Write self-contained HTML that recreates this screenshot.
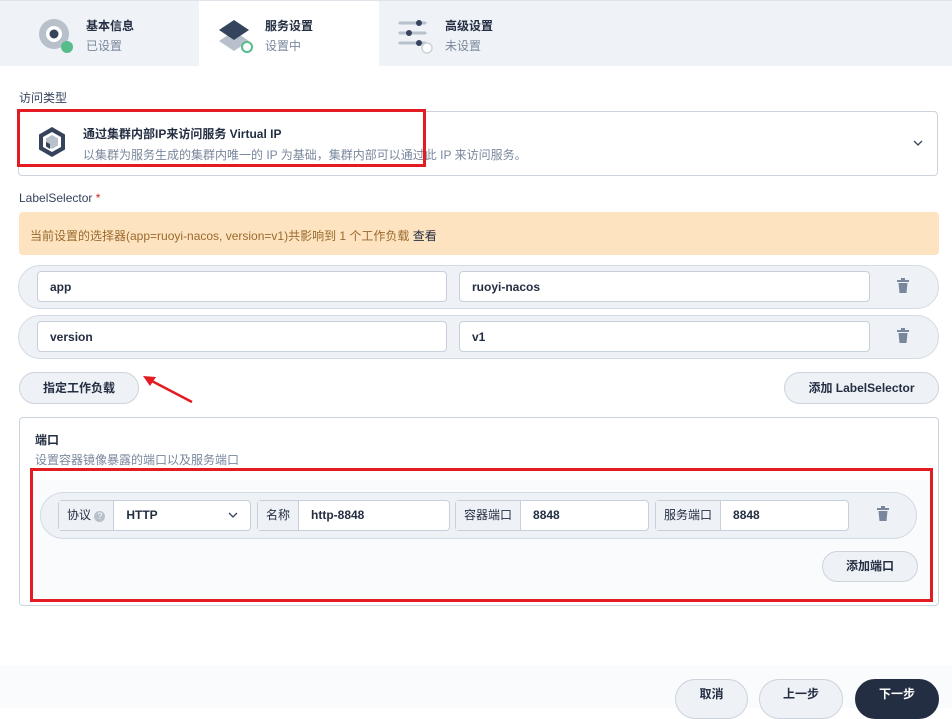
<!DOCTYPE html>
<html><head><meta charset="utf-8"><style>
*{box-sizing:border-box;margin:0;padding:0}
body{width:952px;height:708px;overflow:hidden;background:#fff;font-family:"Liberation Sans","Noto Sans CJK SC",sans-serif;color:#242e42;font-size:12px;position:relative}
.abs{position:absolute}
.tabs{left:0;top:0;width:952px;height:66px;background:#eff2f6;border-top:1px solid #dfe4ea}
.tab{top:0;height:66px}
.t1{font-size:12px;font-weight:bold;color:#242e42}
.t2{font-size:12px;color:#79879c}
.inp{background:#fff;border:1px solid #c7d0da;border-radius:4px;height:31px;font-size:12px;font-weight:bold;padding:8px 12px;color:#242e42}
.pill{border:1px solid #d2dae3;background:#eef2f7;border-radius:22px}
.btn{border:1px solid #ccd3db;background:#eef2f7;border-radius:16px;font-weight:bold;font-size:12px;text-align:center;color:#242e42}
.grp{top:500px;height:31px;border:1px solid #c7d0da;border-radius:4px;background:#fff;display:flex;font-size:12px}
.grp .lb{background:#eef2f7;border-right:1px solid #c7d0da;padding:0 8px;line-height:29px;color:#242e42}
.grp .vl{padding:0 12px;line-height:29px;font-weight:bold}
.red{border:3px solid #e31b23}
</style></head><body>
<div class="abs tabs"></div>
<div class="abs" style="left:199px;top:1px;width:180px;height:65px;background:#fff"></div>
<!-- tab1 icon -->
<svg class="abs" style="left:38px;top:17px" width="38" height="38"><circle cx="16" cy="17" r="15" fill="#b7c0cb"/><circle cx="16" cy="17" r="8" fill="#fff"/><circle cx="16" cy="17" r="4.5" fill="#36435c"/><circle cx="29" cy="30" r="6" fill="#55bc8a"/></svg>
<div class="abs t1" style="left:86px;top:17px">基本信息</div>
<div class="abs t2" style="left:86px;top:37px">已设置</div>
<!-- tab2 icon -->
<svg class="abs" style="left:216px;top:17px" width="40" height="38"><path d="M3 24 L18 14 L33 24 L18 34Z" fill="#b7c0cb"/><path d="M3 13 L18 3 L33 13 L18 23Z" fill="#36435c"/><circle cx="31" cy="30" r="5" fill="#fff" stroke="#55bc8a" stroke-width="2"/></svg>
<div class="abs t1" style="left:265px;top:17px">服务设置</div>
<div class="abs t2" style="left:265px;top:37px">设置中</div>
<!-- tab3 icon -->
<svg class="abs" style="left:397px;top:17px" width="38" height="38"><g stroke="#b7c0cb" stroke-width="3" stroke-linecap="round"><line x1="3" y1="6" x2="28" y2="6"/><line x1="3" y1="16" x2="28" y2="16"/><line x1="3" y1="26" x2="28" y2="26"/></g><circle cx="22" cy="6" r="3" fill="#36435c"/><circle cx="12" cy="16" r="3" fill="#36435c"/><circle cx="22" cy="26" r="3" fill="#36435c"/><circle cx="30" cy="31" r="5" fill="#fff" stroke="#ccd3db" stroke-width="1.5"/></svg>
<div class="abs t1" style="left:445px;top:17px">高级设置</div>
<div class="abs t2" style="left:445px;top:37px">未设置</div>

<div class="abs" style="left:19px;top:89px;color:#36435c">访问类型</div>
<div class="abs" style="left:18px;top:111px;width:920px;height:65px;border:1px solid #ccd3db;border-radius:4px"></div>
<svg class="abs" style="left:36px;top:125px" width="34" height="34"><path d="M16 2 L29 9.5 L29 24.5 L16 32 L3 24.5 L3 9.5Z" fill="#36435c"/><path d="M16 7 L25 12 L25 22 L16 27 L7 22 L7 12Z" fill="#fff"/><path d="M16 10 L22 13.5 L22 20.5 L16 24 L10 20.5 L10 13.5Z" fill="#b7c0cb"/><path d="M10 17 L14 19 L14 24 L10 21.5Z" fill="#36435c"/></svg>
<div class="abs" style="left:83px;top:125px;font-weight:bold;font-size:12px">通过集群内部IP来访问服务 Virtual IP</div>
<div class="abs" style="left:83px;top:146px;color:#79879c">以集群为服务生成的集群内唯一的 IP 为基础，集群内部可以通过此 IP 来访问服务。</div>
<svg class="abs" style="left:912px;top:138px" width="12" height="10"><path d="M2 3 L6 7 L10 3" fill="none" stroke="#36435c" stroke-width="1.3"/></svg>
<div class="abs red" style="left:17px;top:109px;width:409px;height:58px"></div>

<div class="abs" style="left:19px;top:191px;color:#36435c">LabelSelector <span style="color:#ca2621">*</span></div>
<div class="abs" style="left:19px;top:212px;width:920px;height:43px;background:#fde3bf;border-radius:4px"></div>
<div class="abs" style="left:30px;top:227px;color:#9a6a2d">当前设置的选择器(app=ruoyi-nacos, version=v1)共影响到 1 个工作负载 <span style="color:#242e42">查看</span></div>

<div class="abs pill" style="left:18px;top:265px;width:921px;height:44px"></div>
<div class="abs inp" style="left:37px;top:271px;width:410px">app</div>
<div class="abs inp" style="left:459px;top:271px;width:411px">ruoyi-nacos</div>
<div class="abs pill" style="left:18px;top:315px;width:921px;height:44px"></div>
<div class="abs inp" style="left:37px;top:321px;width:410px">version</div>
<div class="abs inp" style="left:459px;top:321px;width:411px">v1</div>
<svg class="abs" style="left:896px;top:278px" width="14" height="16"><rect x="1" y="2" width="12" height="2" fill="#79879c"/><rect x="5" y="0" width="4" height="2" fill="#79879c"/><path d="M2.5 5 H11.5 L10.5 15 H3.5Z" fill="#79879c"/></svg>
<svg class="abs" style="left:896px;top:328px" width="14" height="16"><rect x="1" y="2" width="12" height="2" fill="#79879c"/><rect x="5" y="0" width="4" height="2" fill="#79879c"/><path d="M2.5 5 H11.5 L10.5 15 H3.5Z" fill="#79879c"/></svg>

<div class="abs btn" style="left:19px;top:372px;width:120px;height:32px;line-height:30px">指定工作负载</div>
<svg class="abs" style="left:140px;top:372px" width="60" height="36"><line x1="52" y1="30" x2="8" y2="7" stroke="#e31b23" stroke-width="2.5"/><path d="M3 4 L16 5 L10 14Z" fill="#e31b23"/></svg>
<div class="abs btn" style="left:784px;top:372px;width:155px;height:32px;line-height:30px">添加 LabelSelector</div>

<div class="abs" style="left:19px;top:417px;width:920px;height:189px;border:1px solid #ccd3db;border-radius:4px"></div>
<div class="abs" style="left:35px;top:431px;font-weight:bold">端口</div>
<div class="abs" style="left:35px;top:451px;color:#79879c">设置容器镜像暴露的端口以及服务端口</div>
<div class="abs" style="left:32px;top:480px;width:898px;height:120px;background:#f9fbfd"></div>
<div class="abs pill" style="left:40px;top:492px;width:877px;height:47px;border-radius:24px"></div>
<div class="abs grp" style="left:58px;width:193px"><div class="lb">协议 <span style="display:inline-block;width:11px;height:11px;border-radius:50%;background:#b7c0cb;color:#fff;font-size:9px;line-height:11px;text-align:center">?</span></div><div class="vl" style="flex:1">HTTP</div><svg style="margin:10px 12px 0 0" width="10" height="8"><path d="M1 2 L5 6 L9 2" fill="none" stroke="#36435c" stroke-width="1.3"/></svg></div>
<div class="abs grp" style="left:257px;width:193px"><div class="lb">名称</div><div class="vl">http-8848</div></div>
<div class="abs grp" style="left:455px;width:194px"><div class="lb">容器端口</div><div class="vl">8848</div></div>
<div class="abs grp" style="left:655px;width:194px"><div class="lb">服务端口</div><div class="vl">8848</div></div>
<svg class="abs" style="left:876px;top:506px" width="14" height="16"><rect x="1" y="2" width="12" height="2" fill="#79879c"/><rect x="5" y="0" width="4" height="2" fill="#79879c"/><path d="M2.5 5 H11.5 L10.5 15 H3.5Z" fill="#79879c"/></svg>
<div class="abs btn" style="left:822px;top:551px;width:96px;height:31px;line-height:29px">添加端口</div>
<div class="abs red" style="left:30px;top:468px;width:903px;height:134px"></div>

<div class="abs" style="left:0;top:665px;width:952px;height:43px;background:#f9fbfd"></div>
<div class="abs btn" style="left:675px;top:679px;width:73px;height:40px;line-height:28px;border-radius:20px">取消</div>
<div class="abs btn" style="left:759px;top:679px;width:84px;height:40px;line-height:28px;border-radius:20px">上一步</div>
<div class="abs btn" style="left:855px;top:679px;width:84px;height:40px;line-height:28px;border-radius:20px;background:#242e42;border-color:#242e42;color:#fff">下一步</div>
</body></html>
